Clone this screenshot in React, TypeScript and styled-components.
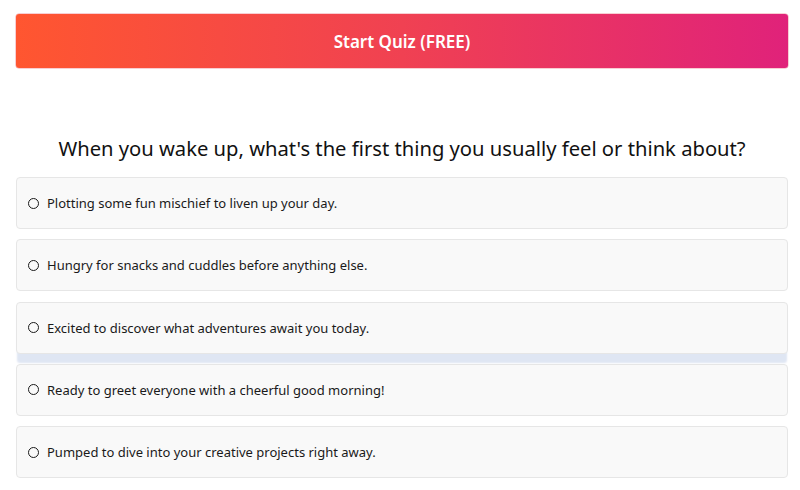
import React from "react";
import styled, { createGlobalStyle } from "styled-components";

const GlobalStyle = createGlobalStyle`
  html, body {
    margin: 0;
    padding: 0;
    background: #ffffff;
  }
  body {
    font-family: "Segoe UI", "Noto Sans", "Open Sans", sans-serif;
    color: #1a1a1a;
  }
`;

const Page = styled.div`
  padding: 14px 12px 0 16px;
  display: flex;
  flex-direction: column;
`;

const StartButton = styled.button`
  height: 54px;
  width: 100%;
  border: none;
  border-radius: 3px;
  background: linear-gradient(to right, #ff5630, #f04152 50%, #e0227a);
  color: #ffffff;
  font-family: inherit;
  font-size: 17px;
  font-weight: 600;
  cursor: pointer;
  box-shadow: 0 0 0 0.5px rgba(230, 60, 80, 0.5);
`;

const Question = styled.h2`
  margin: 65px 0 14px;
  text-align: center;
  font-size: 20.2px;
  font-weight: 400;
  line-height: 30px;
  color: #111111;
`;

const Options = styled.div`
  display: flex;
  flex-direction: column;
  gap: 10.25px;
`;

const Option = styled.label<{ $highlight?: boolean }>`
  box-sizing: border-box;
  height: 52px;
  display: flex;
  align-items: center;
  gap: 8px;
  padding: 0 11px;
  background: #f9f9f9;
  border: 1px solid #e6e6e6;
  border-radius: 4px;
  font-size: 13px;
  color: #1a1a1a;
  cursor: pointer;
  box-shadow: ${(p) => (p.$highlight ? "0 10px 2px -1px #dfe6f3" : "none")};
`;

const Radio = styled.span`
  box-sizing: border-box;
  width: 11px;
  height: 11px;
  border: 1.5px solid #1a1a1a;
  border-radius: 50%;
  flex: none;
`;

const options = [
  "Plotting some fun mischief to liven up your day.",
  "Hungry for snacks and cuddles before anything else.",
  "Excited to discover what adventures await you today.",
  "Ready to greet everyone with a cheerful good morning!",
  "Pumped to dive into your creative projects right away.",
];

export default function App() {
  return (
    <>
      <GlobalStyle />
      <Page>
        <StartButton>Start Quiz (FREE)</StartButton>
        <Question>
          When you wake up, what's the first thing you usually feel or think about?
        </Question>
        <Options>
          {options.map((o, i) => (
            <Option key={o} $highlight={i === 2}>
              <Radio />
              {o}
            </Option>
          ))}
        </Options>
      </Page>
    </>
  );
}
